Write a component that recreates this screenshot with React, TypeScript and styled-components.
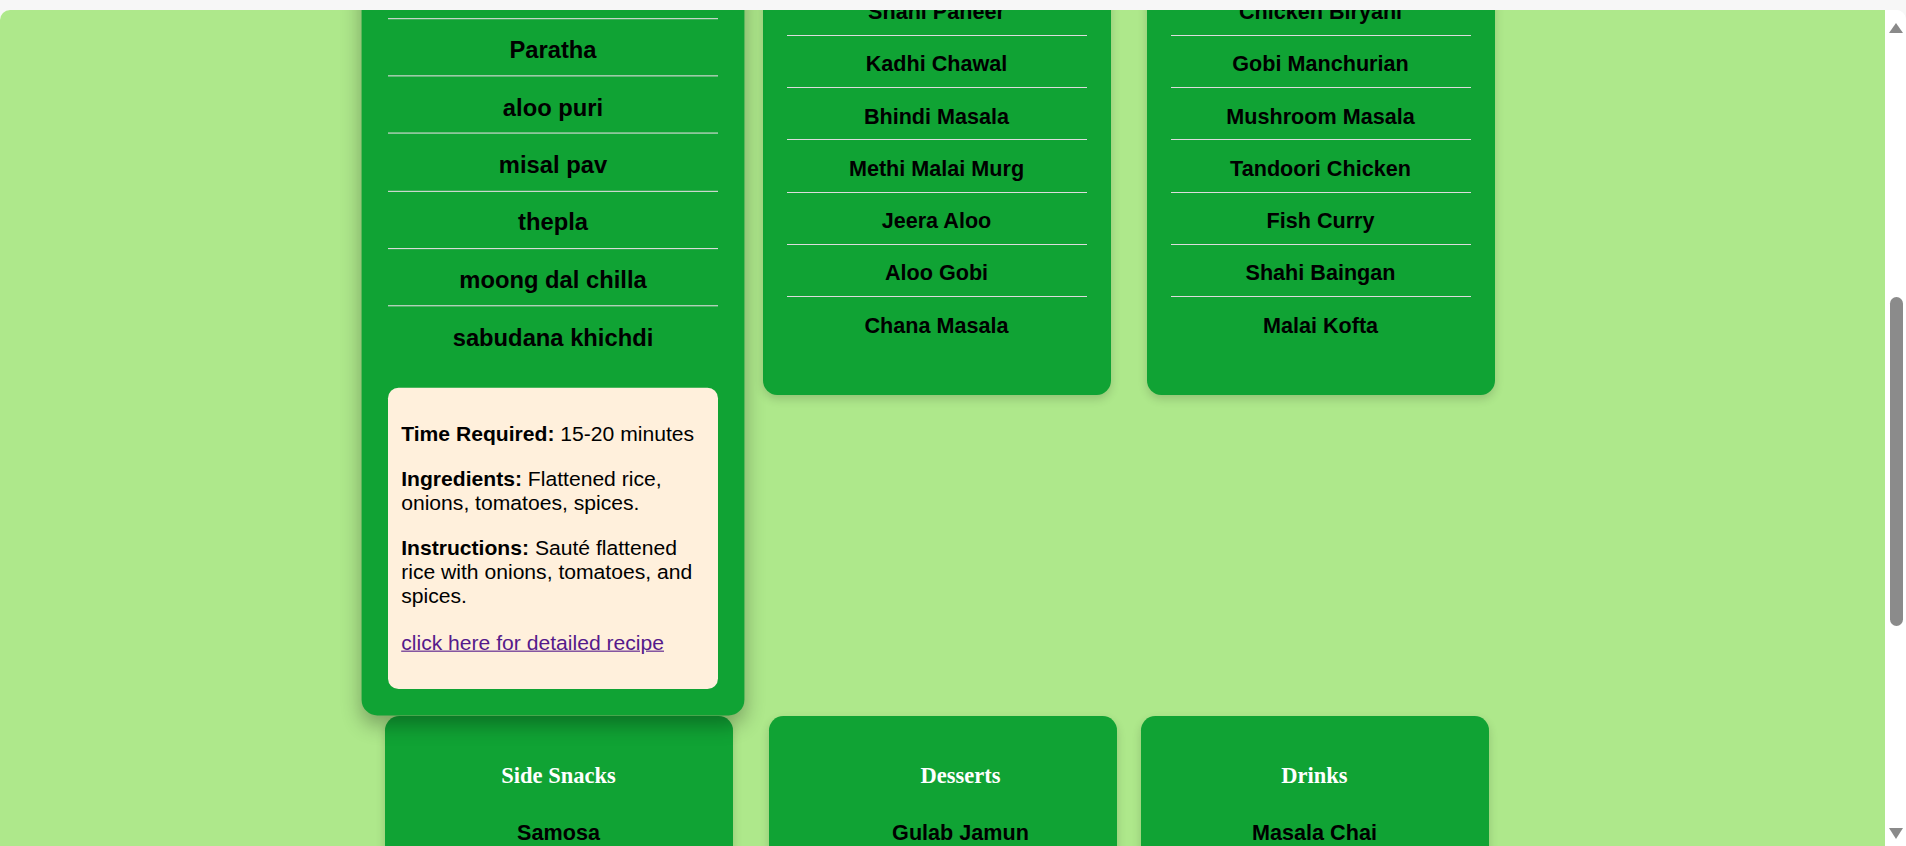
import React, { useLayoutEffect, useRef, useState } from "react";
import styled, { createGlobalStyle, css } from "styled-components";

const GlobalStyle = createGlobalStyle`
  html, body {
    margin: 0;
    padding: 0;
    height: 100%;
    overflow: hidden;
    background: #f7f7f7;
  }
  body {
    padding-top: 10px;
    box-sizing: border-box;
    font-family: "Liberation Sans", Arial, sans-serif;
  }
  #root { height: 100%; }
`;

const Shell = styled.div`
  display: flex;
  height: 836px;
  border-radius: 10px 10px 0 0;
  overflow: hidden;
  background: #ffffff;
`;

const Viewport = styled.div`
  flex: 1 1 auto;
  min-width: 0;
  height: 100%;
  overflow-y: scroll;
  overflow-x: hidden;
  background: #aee88b;
  scrollbar-width: none;
  &::-webkit-scrollbar {
    display: none;
  }
`;

const ScrollBar = styled.div`
  flex: 0 0 21px;
  display: flex;
  flex-direction: column;
  background: #ffffff;
`;

const ArrowButton = styled.div<{ $dir: "up" | "down" }>`
  flex: 0 0 24px;
  display: flex;
  justify-content: center;
  align-items: flex-start;
  padding-left: 1px;
  padding-top: ${(p) => (p.$dir === "up" ? 13 : 6)}px;
  box-sizing: border-box;
  &::before {
    content: "";
    width: 0;
    height: 0;
    border-left: 7.5px solid transparent;
    border-right: 7.5px solid transparent;
    ${(p) =>
      p.$dir === "up"
        ? css`border-bottom: 10px solid #8a8a8a;`
        : css`border-top: 11px solid #8a8a8a;`}
  }
`;

const Track = styled.div`
  flex: 1 1 auto;
  display: flex;
  flex-direction: column;
  padding: 0 3px 0 5px;
`;

const Thumb = styled.div`
  width: 13px;
  border-radius: 7px;
  background: #8b8b8b;
`;

const Page = styled.main`
  padding: 0 12px 77px 0;
`;

const Header = styled.header`
  box-sizing: border-box;
  height: 396px;
  display: flex;
  flex-direction: column;
  align-items: center;
  justify-content: center;
  gap: 12px;
`;

const Title = styled.h1`
  margin: 0;
  font: bold 46px/1.2 "Liberation Serif", "Times New Roman", serif;
  color: #0b6e24;
`;

const Tagline = styled.p`
  margin: 0;
  font: 21.6px/1.3 "Liberation Sans", Arial, sans-serif;
  color: #1d4d17;
`;

const Row = styled.div<{ $gapTop?: number }>`
  display: flex;
  justify-content: center;
  align-items: flex-start;
  gap: 36px;
  margin-top: ${(p) => p.$gapTop ?? 0}px;
`;

const Card = styled.section<{ $active?: boolean; $pull?: number; $indent?: number }>`
  box-sizing: border-box;
  flex: 0 0 348px;
  width: 348px;
  padding: 24px;
  padding-left: ${(p) => 24 + (p.$indent ?? 0)}px;
  border-radius: 14.4px;
  background: #10a334;
  box-shadow: 0 4px 10px rgba(0, 0, 0, 0.16);
  margin-left: ${(p) => p.$pull ?? 0}px;
  ${(p) =>
    p.$active &&
    css`
      position: relative;
      z-index: 2;
      transform: scale(1.1);
      box-shadow: 0 8px 18px rgba(0, 0, 0, 0.3);
    `}
`;

const CardTitle = styled.h3`
  margin: 22.5px 0 15.4px;
  font: bold 22.5px/26px "Liberation Serif", "Times New Roman", serif;
  color: #ffffff;
  text-align: center;
`;

const DishList = styled.ul`
  list-style: none;
  margin: 0 0 22.4px;
  padding: 0;
`;

const Dish = styled.li`
  padding: 15.5px 0 10.75px;
  font: bold 21.6px/25px "Liberation Sans", Arial, sans-serif;
  color: #000000;
  text-align: center;
  border-bottom: 1px solid #dcdcdc;
  &:last-child {
    border-bottom: none;
  }
`;

const Recipe = styled.div`
  background: #fff0dc;
  border-radius: 9.6px;
  padding: 12px;
  font: 19.2px/22px "Liberation Sans", Arial, sans-serif;
  color: #000000;
`;

const RecipeLine = styled.p`
  margin: 19.2px 0;
`;

const RecipeLink = styled.a`
  color: #551a8b;
  text-decoration: underline;
`;

type Menu = { title: string; dishes: string[]; active?: boolean; pull?: number; indent?: number };

const mainMeals: Menu[] = [
  {
    title: "Breakfast",
    active: true,
    dishes: [
      "Poha",
      "Upma",
      "Idli Sambar",
      "Masala Dosa",
      "Paratha",
      "aloo puri",
      "misal pav",
      "thepla",
      "moong dal chilla",
      "sabudana khichdi",
    ],
  },
  {
    title: "Lunch",
    dishes: [
      "Dal Makhani",
      "Rajma Chawal",
      "Chole Bhature",
      "Shahi Paneer",
      "Kadhi Chawal",
      "Bhindi Masala",
      "Methi Malai Murg",
      "Jeera Aloo",
      "Aloo Gobi",
      "Chana Masala",
    ],
  },
  {
    title: "Dinner",
    dishes: [
      "Butter Chicken",
      "Palak Paneer",
      "Paneer Tikka",
      "Chicken Biryani",
      "Gobi Manchurian",
      "Mushroom Masala",
      "Tandoori Chicken",
      "Fish Curry",
      "Shahi Baingan",
      "Malai Kofta",
    ],
  },
];

const extras: Menu[] = [
  {
    title: "Side Snacks",
    dishes: ["Samosa", "Pakora", "Dhokla", "Kachori", "Pani Puri", "Bhel Puri", "Vada Pav", "Aloo Tikki"],
  },
  {
    title: "Desserts",
    indent: 36,
    dishes: ["Gulab Jamun", "Rasgulla", "Jalebi", "Kheer", "Gajar Halwa", "Rasmalai", "Kulfi", "Besan Ladoo"],
  },
  {
    title: "Drinks",
    pull: -12,
    dishes: ["Masala Chai", "Lassi", "Mango Lassi", "Nimbu Pani", "Jaljeera", "Thandai", "Filter Coffee", "Badam Milk"],
  },
];

function MenuCard({ menu }: { menu: Menu }) {
  return (
    <Card $active={menu.active} $pull={menu.pull} $indent={menu.indent}>
      <CardTitle>{menu.title}</CardTitle>
      <DishList>
        {menu.dishes.map((d) => (
          <Dish key={d}>{d}</Dish>
        ))}
      </DishList>
      {menu.active && (
        <Recipe>
          <RecipeLine>
            <strong>Time Required:</strong> 15-20 minutes
          </RecipeLine>
          <RecipeLine>
            <strong>Ingredients:</strong> Flattened rice, onions, tomatoes, spices.
          </RecipeLine>
          <RecipeLine>
            <strong>Instructions:</strong> Sauté flattened rice with onions, tomatoes, and spices.
          </RecipeLine>
          <RecipeLine>
            <RecipeLink href="#poha">click here for detailed recipe</RecipeLink>
          </RecipeLine>
        </Recipe>
      )}
    </Card>
  );
}

export default function App() {
  const viewportRef = useRef<HTMLDivElement>(null);
  const rowRef = useRef<HTMLDivElement>(null);
  const trackRef = useRef<HTMLDivElement>(null);
  const [thumb, setThumb] = useState({ top: 0, height: 0 });

  useLayoutEffect(() => {
    const vp = viewportRef.current;
    const row = rowRef.current;
    const track = trackRef.current;
    if (!vp || !row || !track) return;
    const offset = row.getBoundingClientRect().top - vp.getBoundingClientRect().top + vp.scrollTop;
    vp.scrollTop = offset + 271.1;
    const trackH = track.clientHeight;
    const height = (trackH * vp.clientHeight) / vp.scrollHeight;
    const maxScroll = vp.scrollHeight - vp.clientHeight;
    const top = maxScroll > 0 ? ((trackH - height) * vp.scrollTop) / maxScroll : 0;
    setThumb({ top, height });
  }, []);

  return (
    <>
      <GlobalStyle />
      <Shell>
        <Viewport ref={viewportRef}>
          <Page>
            <Header>
              <Title>Indian Food Menu</Title>
              <Tagline>Hover over a meal to see a quick recipe</Tagline>
            </Header>
            <Row ref={rowRef}>
              {mainMeals.map((m) => (
                <MenuCard key={m.title} menu={m} />
              ))}
            </Row>
            <Row $gapTop={47.5}>
              {extras.map((m) => (
                <MenuCard key={m.title} menu={m} />
              ))}
            </Row>
          </Page>
        </Viewport>
        <ScrollBar>
          <ArrowButton $dir="up" />
          <Track ref={trackRef}>
            <Thumb style={{ marginTop: thumb.top, height: thumb.height }} />
          </Track>
          <ArrowButton $dir="down" />
        </ScrollBar>
      </Shell>
    </>
  );
}
